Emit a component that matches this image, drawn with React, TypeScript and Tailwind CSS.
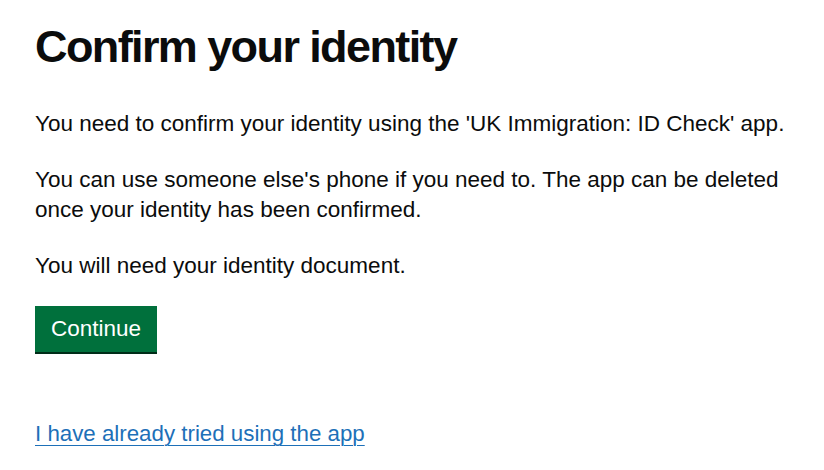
export default function App() {
  const paragraphs = [
    "You need to confirm your identity using the 'UK Immigration: ID Check' app.",
    "You can use someone else's phone if you need to. The app can be deleted once your identity has been confirmed.",
    "You will need your identity document.",
  ];

  return (
    <main
      className="min-h-screen bg-white pl-[35px] pr-[20px] pt-[22px] text-[#0b0c0c]"
      style={{ fontFamily: '"Liberation Sans", Arial, sans-serif' }}
    >
      <h1 className="mb-[37px] text-[45px] font-bold leading-[50px] tracking-[-1.6px]">
        Confirm your identity
      </h1>

      {paragraphs.map((text, i) => (
        <p key={i} className="mb-[25px] text-[22.5px] leading-[30.5px]">
          {text}
        </p>
      ))}

      {/* Primary action */}
      <button
        type="button"
        className="block h-[46px] bg-[#00703c] px-[16px] py-[8px] text-[22.5px] leading-[30px] text-white shadow-[0_2px_0_#002d18]"
      >
        Continue
      </button>

      <a
        href="#"
        className="mt-[67px] inline-block text-[22.3px] leading-[30px] text-[#1d70b8] underline decoration-1 underline-offset-[3.5px]"
      >
        I have already tried using the app
      </a>
    </main>
  );
}
